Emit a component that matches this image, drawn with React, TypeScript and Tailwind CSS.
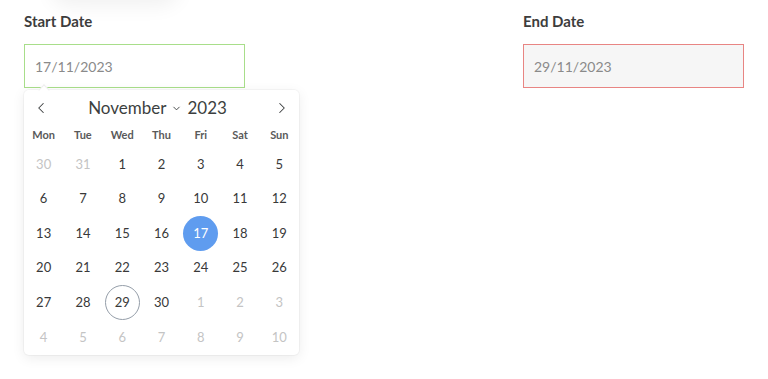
import { ChevronLeft, ChevronRight, ChevronDown } from "lucide-react";

const WEEKDAYS = ["Mon", "Tue", "Wed", "Thu", "Fri", "Sat", "Sun"];

type Day = { n: number; muted?: boolean; selected?: boolean; today?: boolean };

const days: Day[] = [
  { n: 30, muted: true },
  { n: 31, muted: true },
  ...Array.from({ length: 30 }, (_, i) => ({
    n: i + 1,
    selected: i + 1 === 17,
    today: i + 1 === 29,
  })),
  ...Array.from({ length: 10 }, (_, i) => ({ n: i + 1, muted: true })),
];

function Calendar() {
  return (
    <div className="absolute left-0 top-[79px] w-[275px] rounded-[5px] bg-white shadow-[0_3px_13px_rgba(0,0,0,0.08),0_0_0_1px_rgba(0,0,0,0.03)]">
      {/* pointer */}
      <div className="absolute left-[16px] -top-[4px] h-[8px] w-[8px] rotate-45 bg-white border-l border-t border-[#eeeeee]" />

      <div className="relative flex h-[33px] items-center justify-between px-[8px] pt-[2px] text-[#3c3f40]">
        <ChevronLeft className="h-[18px] w-[18px]" strokeWidth={1.4} />
        <div className="-ml-[8px] flex items-center gap-[5px] text-[17px] leading-none">
          <span>November</span>
          <ChevronDown className="h-[11px] w-[11px] mt-[1px]" strokeWidth={2} />
          <span>2023</span>
        </div>
        <ChevronRight className="h-[18px] w-[18px]" strokeWidth={1.4} />
      </div>

      <div className="grid h-[24px] grid-cols-7 items-center text-center text-[11px] font-bold text-[#5a5a5a]">
        {WEEKDAYS.map((d) => (
          <span key={d}>{d}</span>
        ))}
      </div>

      <div className="grid grid-cols-7 auto-rows-[34.6px] text-[13px]">
        {days.map((d, i) => (
          <div key={i} className="flex items-center justify-center">
            <span
              className={
                d.selected
                  ? "flex h-[35px] w-[35px] items-center justify-center rounded-full bg-[#5f9cef] text-white"
                  : d.today
                  ? "flex h-[35px] w-[35px] items-center justify-center rounded-full border border-[#959ea9] text-[#393939]"
                  : d.muted
                  ? "text-[#c4c4c4]"
                  : "text-[#393939]"
              }
            >
              {d.n}
            </span>
          </div>
        ))}
      </div>
    </div>
  );
}

export default function App() {
  return (
    <div
      className="relative h-[379px] w-[768px] overflow-hidden bg-white"
      style={{ fontFamily: "Lato, 'Noto Sans', sans-serif" }}
    >
      <div className="absolute -top-[40px] left-[50px] h-[40px] w-[130px] rounded-full shadow-[0_6px_20px_rgba(0,0,0,0.06)]" />

      <div className="flex gap-[278px] px-6 pt-[11px]">
        <div className="relative w-[223px]">
          <div className="h-[20px] text-[15px] font-bold leading-[20px] text-[#3d3d3d]">Start Date</div>
          <div className="mt-[13px] flex h-[44px] items-center border-[1.5px] border-[#a8de8a] px-[10px] text-[14px] text-[#8a8a8a]">
            17/11/2023
          </div>
          <Calendar />
        </div>

        <div className="w-[223px]">
          <div className="h-[20px] text-[15px] font-bold leading-[20px] text-[#3d3d3d]">End Date</div>
          <div className="mt-[13px] flex h-[44px] items-center border-[1.5px] border-[#e88583] bg-[#f6f6f6] px-[10px] text-[14px] text-[#8a8a8a]">
            29/11/2023
          </div>
        </div>
      </div>
    </div>
  );
}
